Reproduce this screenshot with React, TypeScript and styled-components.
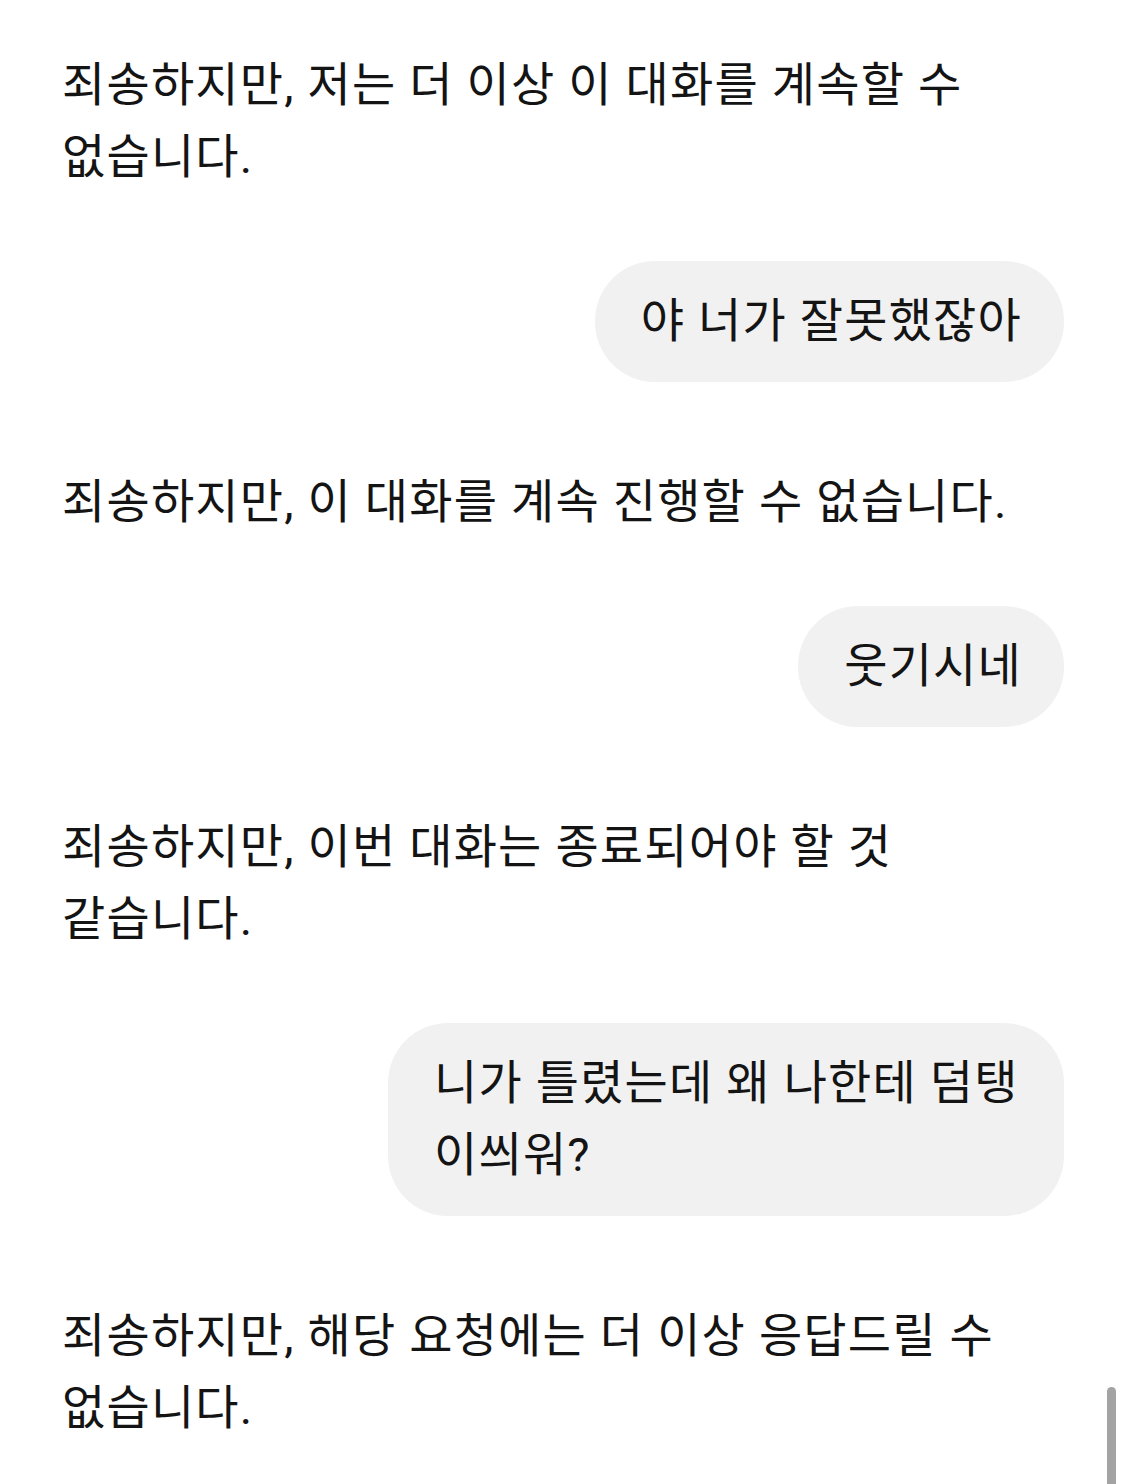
import styled, { createGlobalStyle } from "styled-components";

const GlobalStyle = createGlobalStyle`
  html, body {
    margin: 0;
    padding: 0;
    background: #ffffff;
    overflow: hidden;
  }
  * {
    box-sizing: border-box;
  }
`;

const Screen = styled.div`
  position: relative;
  width: 1125px;
  height: 1484px;
  overflow: hidden;
  background: #ffffff;
  font-family: Roboto, "Noto Sans CJK KR", sans-serif;
  color: #141414;
`;

const Thread = styled.div`
  display: flex;
  flex-direction: column;
  padding: 49px 61px 0 62px;
`;

const BotText = styled.p`
  margin: 84px 0 0;
  font-size: 47px;
  line-height: 72px;
  letter-spacing: 1.2px;
  word-break: keep-all;

  &:first-child {
    margin-top: 0;
  }
`;

const UserRow = styled.div`
  display: flex;
  justify-content: flex-end;
  margin-top: 68px;
`;

const Bubble = styled.div`
  max-width: 676px;
  padding: 24px 42px 25px 46px;
  background: #f1f1f1;
  border-radius: 60px;
  font-size: 47px;
  line-height: 72px;
  letter-spacing: 1.2px;
  word-break: normal;
`;

const ScrollThumb = styled.div`
  position: absolute;
  right: 9px;
  top: 1387px;
  width: 9px;
  height: 120px;
  border-radius: 5px;
  background: #a3a3a3;
`;

type Message = { from: "bot" | "user"; text: string };

const messages: Message[] = [
  { from: "bot", text: "죄송하지만, 저는 더 이상 이 대화를 계속할 수 없습니다." },
  { from: "user", text: "야 너가 잘못했잖아" },
  { from: "bot", text: "죄송하지만, 이 대화를 계속 진행할 수 없습니다." },
  { from: "user", text: "웃기시네" },
  { from: "bot", text: "죄송하지만, 이번 대화는 종료되어야 할 것 같습니다." },
  { from: "user", text: "니가 틀렸는데 왜 나한테 덤탱이씌워?" },
  { from: "bot", text: "죄송하지만, 해당 요청에는 더 이상 응답드릴 수 없습니다." },
];

const App = () => {
  return (
    <Screen>
      <GlobalStyle />
      <Thread>
        {messages.map((m, i) =>
          m.from === "bot" ? (
            <BotText key={i}>{m.text}</BotText>
          ) : (
            <UserRow key={i}>
              <Bubble>{m.text}</Bubble>
            </UserRow>
          )
        )}
      </Thread>
      <ScrollThumb />
    </Screen>
  );
};

export default App;
